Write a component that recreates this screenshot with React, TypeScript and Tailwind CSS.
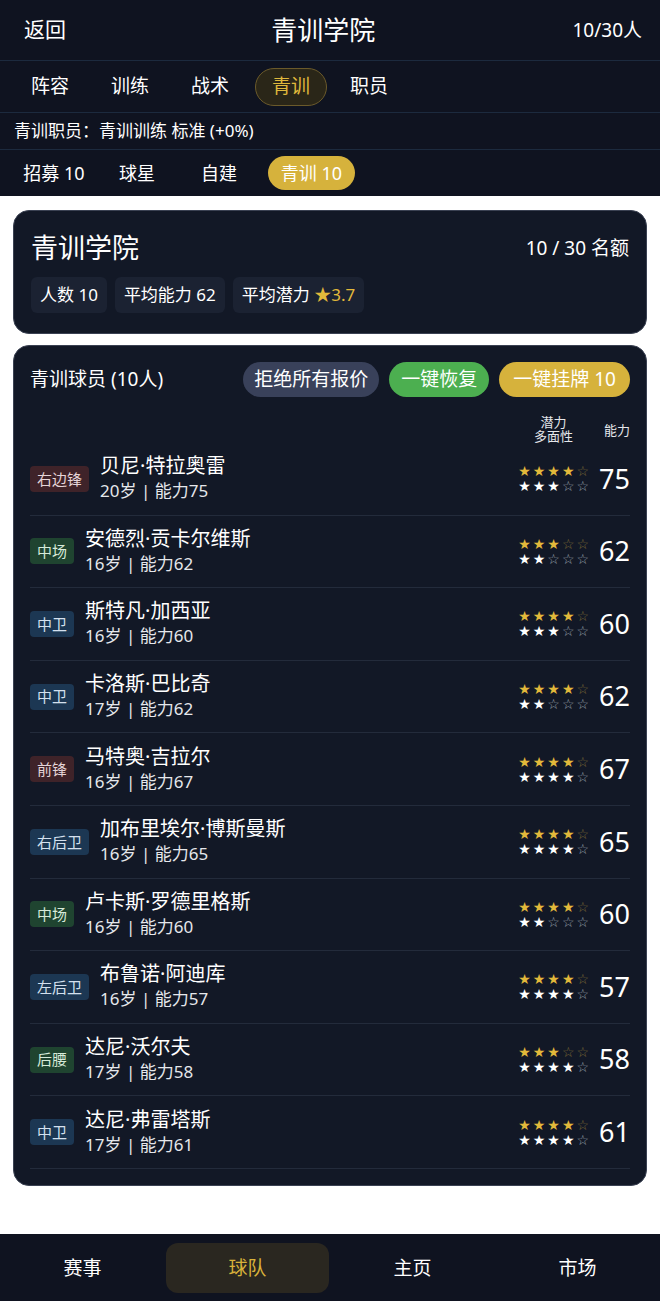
import React from "react";

type Player = {
  pos: string;
  kind: "red" | "green" | "blue";
  name: string;
  age: number;
  ab: number;
  pot: number;
  ver: number;
};

const players: Player[] = [
  { pos: "右边锋", kind: "red", name: "贝尼·特拉奥雷", age: 20, ab: 75, pot: 4, ver: 3 },
  { pos: "中场", kind: "green", name: "安德烈·贡卡尔维斯", age: 16, ab: 62, pot: 3, ver: 2 },
  { pos: "中卫", kind: "blue", name: "斯特凡·加西亚", age: 16, ab: 60, pot: 4, ver: 3 },
  { pos: "中卫", kind: "blue", name: "卡洛斯·巴比奇", age: 17, ab: 62, pot: 4, ver: 2 },
  { pos: "前锋", kind: "red", name: "马特奥·吉拉尔", age: 16, ab: 67, pot: 4, ver: 4 },
  { pos: "右后卫", kind: "blue", name: "加布里埃尔·博斯曼斯", age: 16, ab: 65, pot: 4, ver: 4 },
  { pos: "中场", kind: "green", name: "卢卡斯·罗德里格斯", age: 16, ab: 60, pot: 4, ver: 2 },
  { pos: "左后卫", kind: "blue", name: "布鲁诺·阿迪库", age: 16, ab: 57, pot: 4, ver: 4 },
  { pos: "后腰", kind: "green", name: "达尼·沃尔夫", age: 17, ab: 58, pot: 3, ver: 4 },
  { pos: "中卫", kind: "blue", name: "达尼·弗雷塔斯", age: 17, ab: 61, pot: 4, ver: 4 },
];

const tagClass: Record<Player["kind"], string> = {
  red: "bg-[#3f2329] text-[#e5d5d8]",
  green: "bg-[#1f4430] text-[#d6ead9]",
  blue: "bg-[#1c3753] text-[#d4e0ee]",
};

function Stars({ n, gold }: { n: number; gold: boolean }) {
  const arr = [0, 1, 2, 3, 4];
  return (
    <div className="flex gap-[2px] leading-[14px] text-[14px]" style={{ fontFamily: "'DejaVu Sans', sans-serif" }}>
      {arr.map((i) =>
        i < n ? (
          <span key={i} className={gold ? "text-[#e2b93b]" : "text-white"}>★</span>
        ) : (
          <span key={i} className={gold ? "text-[#7d6a35]" : "text-[#9aa1ad]"}>☆</span>
        )
      )}
    </div>
  );
}

export default function App() {
  return (
    <div
      className="w-[660px] min-h-[1301px] bg-white flex flex-col"
      style={{ fontFamily: "'Noto Sans', 'Noto Sans CJK SC', sans-serif" }}
    >
      {/* Header */}
      <div className="bg-[#0f1320] text-white">
        <div className="h-[61px] flex items-center justify-between px-6 border-b border-[#1c2a3e]">
          <span className="text-[21px] w-[50px]">返回</span>
          <span className="text-[26px]">青训学院</span>
          <span className="text-[19px] -mr-[6px]">10/30人</span>
        </div>
        <div className="h-[52px] flex items-center px-[10px] border-b border-[#1c2a3e] text-[19px]">
          <span className="w-[80px] text-center">阵容</span>
          <span className="w-[80px] text-center">训练</span>
          <span className="w-[80px] text-center">战术</span>
          <span className="ml-[5px] w-[72px] h-[38px] flex items-center justify-center rounded-full border border-[#6b5a2a] bg-[#2a2618] text-[#e0b93c]">青训</span>
          <span className="w-[84px] text-center">职员</span>
        </div>
        <div className="h-[37px] flex items-center px-[14px] border-b border-[#1c2a3e] text-[17px]">
          青训职员：青训训练 标准 (+0%)
        </div>
        <div className="h-[46px] flex items-center px-[8px] text-[18px]">
          <span className="w-[92px] text-center">招募 10</span>
          <span className="w-[74px] text-center">球星</span>
          <span className="w-[90px] text-center">自建</span>
          <span className="ml-[4px] w-[87px] h-[34px] rounded-full bg-[#d6b23c] flex items-center justify-center text-white">青训 10</span>
        </div>
      </div>

      {/* Content */}
      <div className="flex flex-col gap-[11px] px-[13px] pt-[14px]">
        <div className="rounded-[16px] border border-[#3a4152] bg-[#121826] px-[17px] pt-[19px] pb-[20px] text-white">
          <div className="flex items-center justify-between">
            <span className="text-[27px] leading-[36px]">青训学院</span>
            <span className="text-[19px]">10 / 30 名额</span>
          </div>
          <div className="flex gap-[8px] mt-[11px] text-[17px]">
            <span className="h-[36px] px-[9px] flex items-center rounded-[6px] bg-[#1b2232]">人数 10</span>
            <span className="h-[36px] px-[9px] flex items-center rounded-[6px] bg-[#1b2232]">平均能力 62</span>
            <span className="h-[36px] px-[9px] flex items-center rounded-[6px] bg-[#1b2232]">
              平均潜力&nbsp;<span className="text-[#e2b93b]">★3.7</span>
            </span>
          </div>
        </div>

        <div className="rounded-[16px] border border-[#3a4152] bg-[#121826] px-[16px] pt-[16px] pb-[16px] text-white">
          <div className="flex items-center justify-between">
            <span className="text-[19px]">青训球员 (10人)</span>
            <div className="flex gap-[10px] text-[19px]">
              <span className="h-[35px] px-[11px] flex items-center rounded-full bg-[#39415a]">拒绝所有报价</span>
              <span className="h-[35px] px-[12px] flex items-center rounded-full bg-[#4caf50]">一键恢复</span>
              <span className="h-[35px] px-[14px] flex items-center rounded-full bg-[#d6b23c]">一键挂牌 10</span>
            </div>
          </div>
          <div className="flex justify-end items-end mt-[16px] h-[30px] text-[#e5e7eb]">
            <div className="flex flex-col items-center text-[13px] leading-[14px] mr-[31px]">
              <span>潜力</span>
              <span>多面性</span>
            </div>
            <span className="text-[13px] leading-[16px] pb-[5px]">能力</span>
          </div>
          <div className="flex flex-col">
            {players.map((p, i) => (
              <div key={i} className="h-[72.6px] flex items-center border-b border-[#232b3b]">
                <span className={`h-[26px] px-[7px] flex items-center rounded-[4px] text-[15px] ${tagClass[p.kind]}`}>{p.pos}</span>
                <div className="flex flex-col ml-[11px] pb-[2px]">
                  <span className="text-[20px] leading-[27px]">{p.name}</span>
                  <span className="text-[17px] leading-[24px] text-[#e5e7eb]">{p.age}岁 | 能力{p.ab}</span>
                </div>
                <div className="ml-auto flex flex-col items-end gap-[1px]">
                  <Stars n={p.pot} gold={true} />
                  <Stars n={p.ver} gold={false} />
                </div>
                <span className="w-[41px] text-right text-[27px]">{p.ab}</span>
              </div>
            ))}
          </div>
        </div>
      </div>

      <div className="flex-1" />

      {/* Bottom nav */}
      <div className="h-[68px] bg-[#0f1320] grid grid-cols-4 items-center text-[19px] text-white mt-[48px]">
        <span className="text-center">赛事</span>
        <span className="h-[50px] mx-[1px] rounded-[12px] bg-[#2a2720] text-[#d9b23a] flex items-center justify-center">球队</span>
        <span className="text-center">主页</span>
        <span className="text-center">市场</span>
      </div>
    </div>
  );
}
